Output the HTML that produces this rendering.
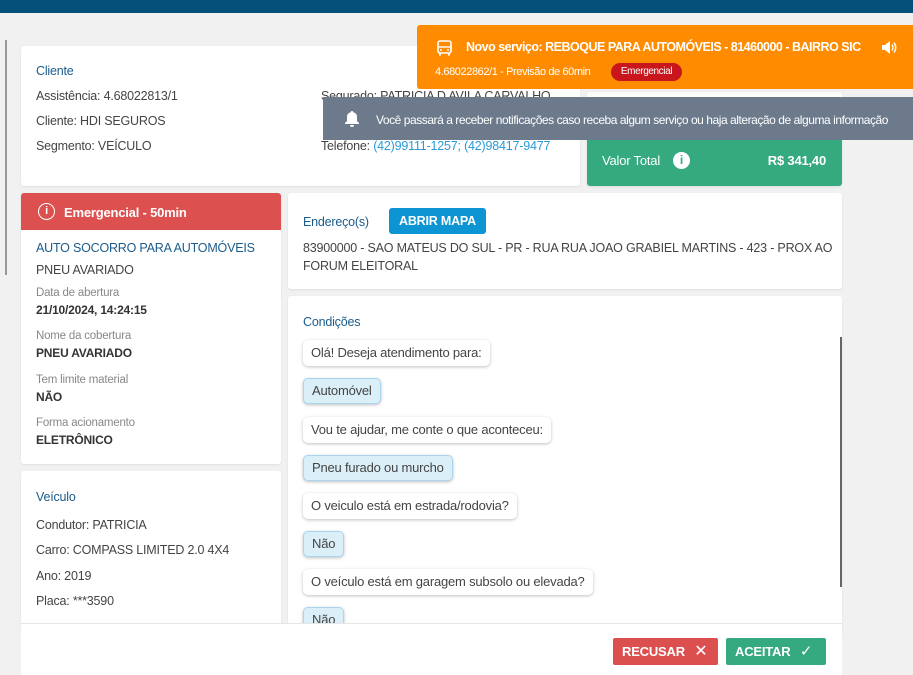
<!DOCTYPE html>
<html><head><meta charset="utf-8"><style>
*{margin:0;padding:0;box-sizing:border-box}
body{width:913px;height:675px;overflow:hidden;background:#f1f1f1;font-family:"Liberation Sans",sans-serif;font-size:12.5px;color:#444;position:relative;letter-spacing:-0.2px}
.a{position:absolute}
.card{position:absolute;background:#fff;border-radius:3px;box-shadow:0 1px 2px rgba(0,0,0,.08)}
.t{color:#1b5c8c;font-size:12.5px}
.lbl{color:#888;font-size:11.5px}
.val{color:#333;font-weight:bold;font-size:12px}
.b{position:absolute;left:15px;height:26px;line-height:26px;padding:0 8px;border-radius:5px;background:#fff;box-shadow:0 1px 3px rgba(0,0,0,.25);font-size:13px;color:#444;white-space:nowrap}
.b.u{background:#dbeff9;border:1px solid #a9d5ef;line-height:24px}
</style></head><body>
<div class="a" style="left:0;top:0;width:913px;height:13px;background:#04507a"></div>
<div class="a" style="left:5px;top:40px;width:2px;height:235px;background:#999"></div>

<div class="card" style="left:21px;top:46px;width:559px;height:140px">
 <div class="a t" style="left:15px;top:18px">Cliente</div>
 <div class="a" style="left:15px;top:43px">Assistência: 4.68022813/1</div>
 <div class="a" style="left:15px;top:68px">Cliente: HDI SEGUROS</div>
 <div class="a" style="left:15px;top:93px">Segmento: VEÍCULO</div>
 <div class="a" style="left:300px;top:43px">Segurado: PATRICIA D AVILA CARVALHO</div>
 <div class="a" style="left:300px;top:93px">Telefone: <span style="color:#2a9ad6">(42)99111-1257; (42)98417-9477</span></div>
</div>
<div class="card" style="left:587px;top:92px;width:255px;height:94px;overflow:hidden">
 <div class="a" style="left:0;top:40px;width:255px;height:54px;background:#35aa7f;color:#fff">
  <div class="a" style="left:15px;top:21px;font-size:13px">Valor Total</div>
  <div class="a" style="left:86px;top:20px;width:17px;height:17px;border-radius:50%;background:#fff;color:#35aa7f;font-weight:bold;font-size:12px;text-align:center;line-height:17px">i</div>
  <div class="a" style="right:16px;top:21px;font-weight:bold;font-size:13px">R$ 341,40</div>
 </div>
</div>

<div class="card" style="left:21px;top:193px;width:260px;height:271px;overflow:hidden">
 <div class="a" style="left:0;top:0;width:260px;height:37px;background:#dc5050;color:#fff">
  <div class="a" style="left:17px;top:10px;width:17px;height:17px;border:1.6px solid #fff;border-radius:50%;text-align:center;font-size:11px;line-height:14px;font-weight:bold">i</div>
  <div class="a" style="left:43px;top:12px;font-weight:bold;font-size:13px">Emergencial - 50min</div>
 </div>
 <div class="a t" style="left:15px;top:48px">AUTO SOCORRO PARA AUTOMÓVEIS</div>
 <div class="a" style="left:15px;top:70px">PNEU AVARIADO</div>
 <div class="a lbl" style="left:15px;top:94px">Data de abertura</div>
 <div class="a val" style="left:15px;top:110px">21/10/2024, 14:24:15</div>
 <div class="a lbl" style="left:15px;top:137px">Nome da cobertura</div>
 <div class="a val" style="left:15px;top:153px">PNEU AVARIADO</div>
 <div class="a lbl" style="left:15px;top:181px">Tem limite material</div>
 <div class="a val" style="left:15px;top:197px">NÃO</div>
 <div class="a lbl" style="left:15px;top:224px">Forma acionamento</div>
 <div class="a val" style="left:15px;top:240px">ELETRÔNICO</div>
</div>

<div class="card" style="left:21px;top:471px;width:260px;height:160px">
 <div class="a t" style="left:15px;top:19px">Veículo</div>
 <div class="a" style="left:15px;top:47px">Condutor: PATRICIA</div>
 <div class="a" style="left:15px;top:72px">Carro: COMPASS LIMITED 2.0 4X4</div>
 <div class="a" style="left:15px;top:98px">Ano: 2019</div>
 <div class="a" style="left:15px;top:123px">Placa: ***3590</div>
</div>

<div class="card" style="left:288px;top:193px;width:554px;height:96px">
 <div class="a t" style="left:15px;top:22px">Endereço(s)</div>
 <div class="a" style="left:101px;top:15px;width:97px;height:26px;background:#0d95d3;border-radius:3px;color:#fff;font-weight:bold;font-size:12.5px;text-align:center;line-height:26px">ABRIR MAPA</div>
 <div class="a" style="left:15px;top:46px;width:530px;line-height:18px">83900000 - SAO MATEUS DO SUL - PR - RUA RUA JOAO GRABIEL MARTINS - 423 - PROX AO FORUM ELEITORAL</div>
</div>

<div class="card" style="left:288px;top:296px;width:554px;height:340px;overflow:hidden">
 <div class="a t" style="left:15px;top:19px">Condições</div>
 <div class="a" style="left:552px;top:41px;width:2px;height:250px;background:#666"></div>
 <div class="b" style="top:44px">Olá! Deseja atendimento para:</div>
 <div class="b u" style="top:82px">Automóvel</div>
 <div class="b" style="top:121px">Vou te ajudar, me conte o que aconteceu:</div>
 <div class="b u" style="top:159px">Pneu furado ou murcho</div>
 <div class="b" style="top:197px">O veiculo está em estrada/rodovia?</div>
 <div class="b u" style="top:235px">Não</div>
 <div class="b" style="top:273px">O veículo está em garagem subsolo ou elevada?</div>
 <div class="b u" style="top:311px">Não</div>
</div>

<div class="a" style="left:21px;top:623px;width:821px;height:52px;background:#fff;border-top:1px solid #e6e6e6">
 <div class="a" style="left:592px;top:14px;width:105px;height:27px;background:#dc4f4f;border-radius:2px;color:#fff;font-weight:bold;font-size:13px;line-height:27px;padding-left:9px">RECUSAR <span style="font-weight:normal;margin-left:6px;font-size:16px">✕</span></div>
 <div class="a" style="left:705px;top:14px;width:100px;height:27px;background:#35a97f;border-radius:2px;color:#fff;font-weight:bold;font-size:13px;line-height:27px;padding-left:9px">ACEITAR <span style="font-weight:normal;margin-left:6px;font-size:15px">✓</span></div>
</div>

<div class="a" style="left:417px;top:25px;width:496px;height:64px;background:#ff8c00;border-radius:3px 0 0 3px;color:#fff">
 <svg class="a" style="left:19px;top:15px" width="17" height="16" viewBox="0 0 17 16"><rect x="2" y="1" width="13" height="12" rx="2" fill="none" stroke="#fff" stroke-width="1.6"/><line x1="2" y1="7" x2="15" y2="7" stroke="#fff" stroke-width="1.4"/><circle cx="5" cy="10" r="1" fill="#fff"/><circle cx="12" cy="10" r="1" fill="#fff"/><rect x="3" y="13" width="2" height="2.5" fill="#fff"/><rect x="12" y="13" width="2" height="2.5" fill="#fff"/></svg>
 <div class="a" style="left:49px;top:15px;font-weight:bold;font-size:12.5px;letter-spacing:-0.5px;white-space:nowrap">Novo serviço: REBOQUE PARA AUTOMÓVEIS - 81460000 - BAIRRO SIC</div>
 <svg class="a" style="left:464px;top:15px" width="16" height="15" viewBox="0 0 16 15"><path d="M1 5h3l5-4v13l-5-4H1z" fill="#fff"/><path d="M11 4.5q2 3 0 6M13 2.5q3.5 5 0 10" fill="none" stroke="#fff" stroke-width="1.4"/></svg>
 <div class="a" style="left:18px;top:41px;font-size:11px;letter-spacing:-0.4px">4.68022862/1 - Previsão de 60min</div>
 <div class="a" style="left:194px;top:38px;width:71px;height:18px;background:#c8161c;border-radius:9px;font-size:10px;letter-spacing:-0.4px;text-align:center;line-height:18px">Emergencial</div>
</div>
<div class="a" style="left:323px;top:97px;width:590px;height:43px;background:#6c7a8c;color:#fff">
 <svg class="a" style="left:21px;top:13px" width="16" height="17" viewBox="0 0 16 17"><path d="M8 1a1.3 1.3 0 0 1 1.3 1.3A5 5 0 0 1 13 7v4l2 2v1H1v-1l2-2V7a5 5 0 0 1 3.7-4.7A1.3 1.3 0 0 1 8 1z" fill="#fff"/><path d="M6 15a2 2 0 0 0 4 0z" fill="#fff"/></svg>
 <div class="a" style="left:53px;top:16px;font-size:12px;letter-spacing:-0.45px;white-space:nowrap">Você passará a receber notificações caso receba algum serviço ou haja alteração de alguma informação</div>
</div>
</body></html>
